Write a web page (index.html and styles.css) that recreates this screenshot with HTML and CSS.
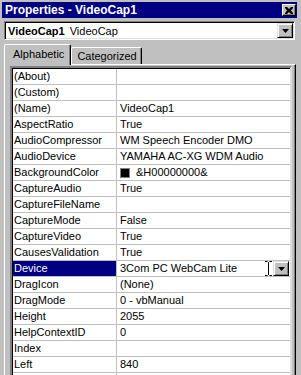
FILE: index.html
```html
<!DOCTYPE html>
<html lang="en">
  <head>
    <meta charset="UTF-8" />
    <title>Properties - VideoCap1</title>
    <link rel="stylesheet" href="styles.css">
  </head>
  <body>
    <div class="window">
      <!-- Title bar -->
      <div class="titlebar">
        <span class="title">Properties - VideoCap1</span>
        <span class="close-btn">
          <svg width="8" height="7" viewBox="0 0 8 7">
            <path d="M0 0h2l2 2 2-2h2v1L6 3.5 8 6v1H6L4 5 2 7H0V6l2-2.5L0 1z" fill="#000" />
          </svg>
        </span>
      </div>

      <!-- Object selector -->
      <div class="combo">
        <span class="combo-text"><b>VideoCap1</b> VideoCap</span>
        <span class="drop-btn">
          <svg width="7" height="4" viewBox="0 0 7 4"><path d="M0 0h7L3.5 4z" fill="#000" /></svg>
        </span>
      </div>

      <!-- Tabs -->
      <div class="tabs">
        <div class="tab active">Alphabetic</div>
        <div class="tab">Categorized</div>
      </div>

      <!-- Property grid -->
      <div class="panel">
        <div class="grid">
          <div class="row"><div class="name">(About)</div><div class="value"></div></div>
          <div class="row"><div class="name">(Custom)</div><div class="value"></div></div>
          <div class="row"><div class="name">(Name)</div><div class="value">VideoCap1</div></div>
          <div class="row"><div class="name">AspectRatio</div><div class="value">True</div></div>
          <div class="row"><div class="name">AudioCompressor</div><div class="value">WM Speech Encoder DMO</div></div>
          <div class="row"><div class="name">AudioDevice</div><div class="value">YAMAHA AC-XG WDM Audio</div></div>
          <div class="row"><div class="name">BackgroundColor</div><div class="value"><span class="swatch"></span>&amp;H00000000&amp;</div></div>
          <div class="row"><div class="name">CaptureAudio</div><div class="value">True</div></div>
          <div class="row"><div class="name">CaptureFileName</div><div class="value"></div></div>
          <div class="row"><div class="name">CaptureMode</div><div class="value">False</div></div>
          <div class="row"><div class="name">CaptureVideo</div><div class="value">True</div></div>
          <div class="row"><div class="name">CausesValidation</div><div class="value">True</div></div>
          <div class="row selected">
            <div class="name">Device</div>
            <div class="value">
              <span class="value-text">3Com PC WebCam Lite</span>
              <svg class="ibeam" width="7" height="15" viewBox="0 0 7 15">
                <path d="M0 0.5h2.5M4.5 0.5H7M3.5 1v13M0 14.5h2.5M4.5 14.5H7" stroke="#000" stroke-width="1" fill="none" />
              </svg>
              <span class="drop-btn small">
                <svg width="7" height="4" viewBox="0 0 7 4"><path d="M0 0h7L3.5 4z" fill="#000" /></svg>
              </span>
            </div>
          </div>
          <div class="row"><div class="name">DragIcon</div><div class="value">(None)</div></div>
          <div class="row"><div class="name">DragMode</div><div class="value">0 - vbManual</div></div>
          <div class="row"><div class="name">Height</div><div class="value">2055</div></div>
          <div class="row"><div class="name">HelpContextID</div><div class="value">0</div></div>
          <div class="row"><div class="name">Index</div><div class="value"></div></div>
          <div class="row"><div class="name">Left</div><div class="value">840</div></div>
          <div class="row"><div class="name"></div><div class="value"></div></div>
        </div>
      </div>
    </div>
  </body>
</html>
```

FILE: styles.css
```css
body {
  margin: 0;
  width: 301px;
  height: 375px;
  overflow: hidden;
  background-color: #c0c0c0;
  font-family: "Liberation Sans", Arial, sans-serif;
  font-size: 11px;
  color: #000;
}

.window {
  padding: 2px 4px 0 2px;
}

/* Title bar */
.titlebar {
  height: 16px;
  background-color: #000080;
  color: #fff;
  font-size: 12px;
  font-weight: bold;
  display: flex;
  align-items: center;
  justify-content: space-between;
  padding: 0 1px 0 3px;
}
.close-btn {
  width: 14px;
  height: 12px;
  box-sizing: border-box;
  background-color: #c0c0c0;
  border: 1px solid;
  border-color: #fff #000 #000 #fff;
  box-shadow: inset -1px -1px #808080;
  display: flex;
  align-items: center;
  justify-content: center;
}

/* Object combo box */
.combo {
  margin: 3px 2px 0 2px;
  height: 19px;
  box-sizing: border-box;
  background-color: #fff;
  border: 1px solid;
  border-color: #808080 #fff #fff #808080;
  box-shadow: inset 1px 1px #000, inset -1px -1px #dfdfdf;
  display: flex;
  align-items: center;
  justify-content: space-between;
  padding: 1px 1px 1px 3px;
}
.combo-text b {
  margin-right: 2px;
}
.drop-btn {
  width: 16px;
  height: 15px;
  box-sizing: border-box;
  background-color: #c0c0c0;
  border: 1px solid;
  border-color: #dfdfdf #000 #000 #dfdfdf;
  box-shadow: inset 1px 1px #fff, inset -1px -1px #808080;
  display: flex;
  align-items: center;
  justify-content: center;
  padding-top: 1px;
}

/* Tabs */
.tabs {
  display: flex;
  align-items: flex-end;
  margin-top: 4px;
  padding-left: 2px;
  height: 20px;
  position: relative;
  z-index: 1;
}
.tab {
  height: 17px;
  box-sizing: border-box;
  padding: 2px 4px 0 5px;
  border: 1px solid;
  border-bottom: none;
  border-color: #fff #000 transparent #fff;
  box-shadow: inset -1px 0 #808080;
  border-radius: 2px 2px 0 0;
  line-height: 13px;
}
.tab.active {
  height: 21px;
  margin-bottom: -1px;
  padding: 3px 6px 0 8px;
  background-color: #c0c0c0;
}

/* Panel under the tabs */
.panel {
  margin: 0 1px 0 2px;
  height: 312px;
  overflow: hidden;
  box-sizing: border-box;
  border-top: 1px solid #fff;
  border-left: 1px solid #fff;
  border-right: 1px solid #000;
  box-shadow: inset -1px 0 #808080;
  padding: 1px 3px 0 5px;
}
.grid {
  border: 2px solid;
  border-color: #808080 #dfdfdf #dfdfdf #808080;
  box-shadow: inset 1px 1px #000;
  background-color: #fff;
  padding: 1px 0 0 1px;
}
.row {
  display: grid;
  grid-template-columns: 104px 1fr;
  height: 16px;
  box-sizing: border-box;
  border-bottom: 1px solid #c0c0c0;
  line-height: 15px;
  white-space: nowrap;
}
.name {
  border-right: 1px solid #c0c0c0;
  padding-left: 1px;
  overflow: hidden;
}
.value {
  padding-left: 3px;
  overflow: hidden;
  display: flex;
  align-items: center;
}
.swatch {
  width: 10px;
  height: 10px;
  background-color: #000;
  border: 1px solid #808080;
  box-sizing: border-box;
  margin-right: 6px;
}

/* Selected row */
.row.selected .name {
  background-color: #000080;
  color: #fff;
}
.value-text {
  flex: 1;
}
.ibeam {
  margin-right: 1px;
}
.drop-btn.small {
  height: 15px;
  margin-right: 1px;
}
```
